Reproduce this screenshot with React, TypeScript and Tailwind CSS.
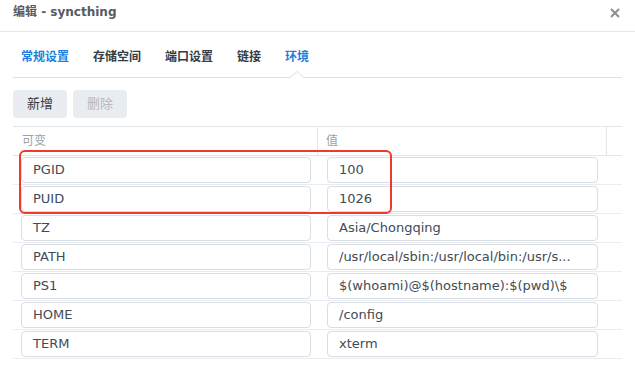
import React from "react";

const rows: [string, string][] = [
  ["PGID", "100"],
  ["PUID", "1026"],
  ["TZ", "Asia/Chongqing"],
  ["PATH", "/usr/local/sbin:/usr/local/bin:/usr/s..."],
  ["PS1", "$(whoami)@$(hostname):$(pwd)\\$"],
  ["HOME", "/config"],
  ["TERM", "xterm"],
];

const cjk = { fontFamily: '"DejaVu Sans", "Noto Sans CJK SC", sans-serif' };

export default function App() {
  return (
    <div className="relative w-[635px] h-[379px] overflow-hidden bg-white" style={cjk}>
      {/* Title bar */}
      <div className="flex h-[32px] items-start justify-between border-b border-[#e3e7ec] pl-[13px] pr-[15px] pt-[4px]">
        <div className="text-[12px] font-bold leading-[16px] text-[#535b63]">编辑 - syncthing</div>
        <svg width="10" height="10" viewBox="0 0 10 10" className="mt-[4px]">
          <path d="M1 1 L9 9 M9 1 L1 9" stroke="#8b9096" strokeWidth="2" />
        </svg>
      </div>

      {/* Tabs */}
      <div className="relative mx-[13px] flex h-[46px] items-end gap-[24px] border-b border-[#dde2e8] pb-[12px] pl-[8px] text-[12px] font-bold leading-[16px]">
        <span className="text-[#1b7fe0]">常规设置</span>
        <span className="text-[#353c43]">存储空间</span>
        <span className="text-[#353c43]">端口设置</span>
        <span className="text-[#353c43]">链接</span>
        <span className="text-[#1b7fe0]">环境</span>
        <svg width="14" height="7" viewBox="0 0 14 7" className="absolute bottom-[-1px] left-[277px]">
          <polygon points="0,7 7,0.5 14,7" fill="#ffffff" />
          <polyline points="0,6.5 7,0.5 14,6.5" fill="none" stroke="#dde2e8" strokeWidth="1" />
        </svg>
      </div>

      {/* Buttons */}
      <div className="ml-[13px] mt-[12px] flex gap-[6px] text-[13px]">
        <div className="flex h-[28px] w-[54px] items-center justify-center rounded-[4px] bg-[#e9edf1] text-[#343a40]">新增</div>
        <div className="flex h-[28px] w-[54px] items-center justify-center rounded-[4px] bg-[#e9edf1] text-[#b3b9c0]">删除</div>
      </div>

      {/* Table */}
      <div className="mx-[13px] mt-[8px] border-t border-[#e3e7ec]">
        <div className="grid h-[29px] grid-cols-[305px_289px_16px] border-b border-[#e3e7ec] text-[12px] text-[#9ba2a9]">
          <div className="flex items-center border-r border-[#e3e7ec] pl-[9px]">可变</div>
          <div className="flex items-center border-r border-[#e3e7ec] pl-[8px]">值</div>
          <div />
        </div>
        {rows.map(([k, v]) => (
          <div key={k} className="grid h-[29px] grid-cols-[305px_289px_16px] border-b border-[#e9ecf0] pt-[1px]">
            <div className="pl-[8px]">
              <div className="flex h-[26px] w-[290px] items-center overflow-hidden whitespace-nowrap rounded-[4px] border border-[#d8dee4] pl-[11px] text-[13px] text-[#414b55]">
                {k}
              </div>
            </div>
            <div className="pl-[9px]">
              <div className="flex h-[26px] w-[271px] items-center overflow-hidden whitespace-nowrap rounded-[4px] border border-[#d8dee4] pl-[11px] text-[13px] text-[#414b55]">
                {v}
              </div>
            </div>
            <div />
          </div>
        ))}
      </div>

      {/* Red highlight */}
      <div className="absolute left-[19px] top-[150px] h-[64px] w-[373px] rounded-[6px] border-2 border-[#ec3a2e]" />
    </div>
  );
}
